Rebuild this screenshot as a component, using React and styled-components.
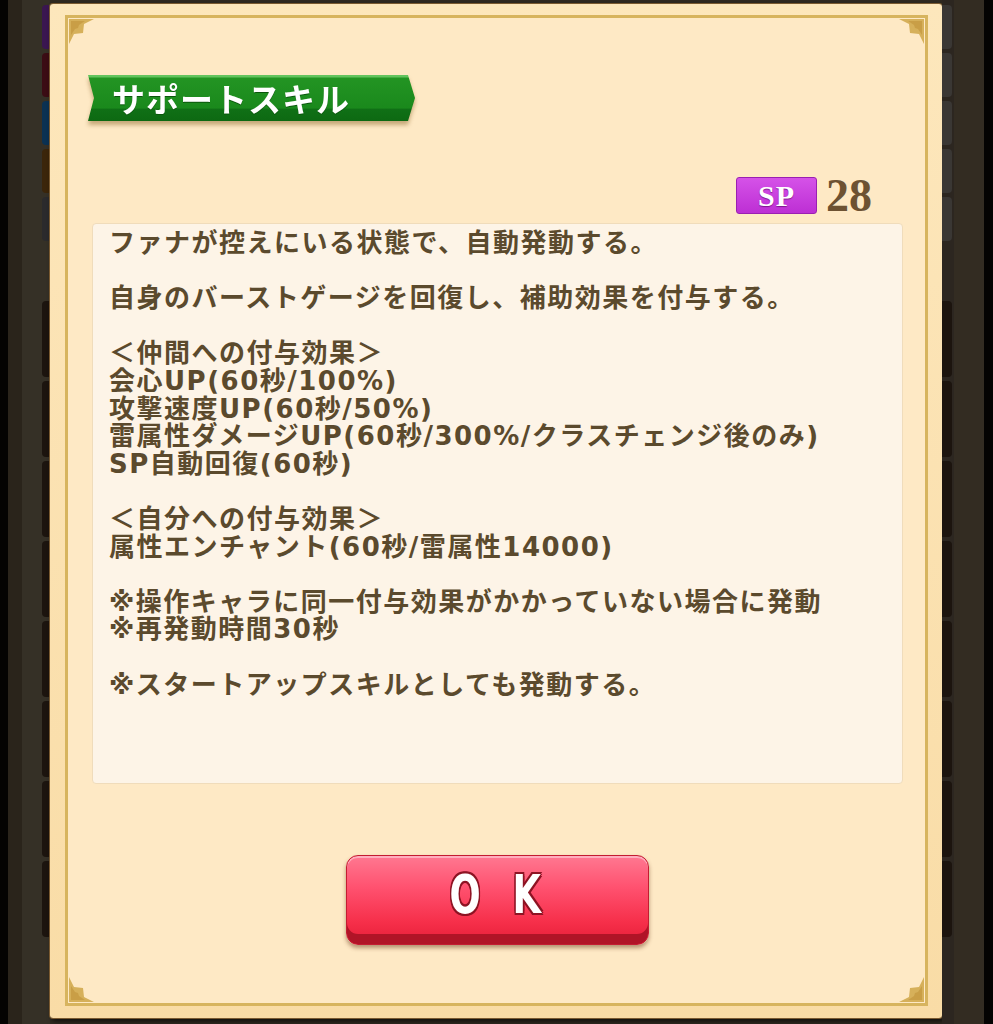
import React from "react";
import styled, { createGlobalStyle } from "styled-components";

const GlobalStyle = createGlobalStyle`
  html, body {
    margin: 0;
    padding: 0;
    background: #000;
    overflow: hidden;
  }
  body {
    font-family: "Noto Sans CJK JP", "Noto Sans", sans-serif;
  }
`;

const skillText = `ファナが控えにいる状態で、自動発動する。

自身のバーストゲージを回復し、補助効果を付与する。

＜仲間への付与効果＞
会心UP(60秒/100%)
攻撃速度UP(60秒/50%)
雷属性ダメージUP(60秒/300%/クラスチェンジ後のみ)
SP自動回復(60秒)

＜自分への付与効果＞
属性エンチャント(60秒/雷属性14000)

※操作キャラに同一付与効果がかかっていない場合に発動
※再発動時間30秒

※スタートアップスキルとしても発動する。`;

const leftTabs = ["#3a1650", "#3b0c14", "#0b3152", "#3b250a", "#2b2a2c"];

function Corner({ flip }) {
  return (
    <CornerMark $flip={flip} width="28" height="28" viewBox="0 0 28 28">
      <path d="M0 0 H25 L15 5 L14 14 L5 15 L0 25 Z" fill="#d6b05a" />
      <path d="M2 2 H16 L10 6 L9 9 L6 10 L2 16 Z" fill="#c99e46" />
    </CornerMark>
  );
}

export default function App() {
  return (
    <>
      <GlobalStyle />
      <Screen>
        <LeftRail>
          <TabColumn $side="left">
            {leftTabs.map((c) => (
              <Tab key={c} $color={c} $side="left" />
            ))}
            <TabGap />
            {[0, 1, 2, 3, 4, 5, 6, 7].map((i) => (
              <Tab key={i} $color="#1c140e" $side="left" $tall />
            ))}
          </TabColumn>
        </LeftRail>

        <Panel>
          <Inner>
            <Corner flip="tl" />
            <Corner flip="tr" />
            <Corner flip="bl" />
            <Corner flip="br" />

            <RibbonShadow>
              <Ribbon>サポートスキル</Ribbon>
            </RibbonShadow>

            <SpRow>
              <SpBadge>SP</SpBadge>
              <SpValue>28</SpValue>
            </SpRow>

            <TextBox>{skillText}</TextBox>

            <ButtonRow>
              <OkButton>
                <OkLabel>O K</OkLabel>
              </OkButton>
            </ButtonRow>
          </Inner>
        </Panel>

        <RightRail>
          <TabColumn $side="right">
            {[0, 1, 2, 3, 4].map((i) => (
              <Tab key={i} $color="#3a3734" $side="right" />
            ))}
            <TabGap />
            {[0, 1, 2, 3, 4, 5, 6, 7].map((i) => (
              <Tab key={i} $color="#1c140e" $side="right" $tall />
            ))}
          </TabColumn>
        </RightRail>
      </Screen>
    </>
  );
}

const Screen = styled.div`
  display: flex;
  width: 993px;
  height: 1024px;
  background: #2f2920;
`;

const LeftRail = styled.div`
  flex: none;
  width: 50px;
  height: 100%;
  display: flex;
  justify-content: flex-end;
  background: linear-gradient(
    to right,
    #040302 0 8px,
    #2a241b 8px 22px,
    #353026 22px 42px
  );
`;

const RightRail = styled.div`
  flex: none;
  width: 51px;
  height: 100%;
  display: flex;
  justify-content: flex-start;
  background: linear-gradient(
    to right,
    #2c2620 0 12px,
    #332c22 12px 42px,
    #040302 42px
  );
`;

const TabColumn = styled.div`
  width: ${(p) => (p.$side === "left" ? "8px" : "10px")};
  display: flex;
  flex-direction: column;
  gap: 4px;
  padding-top: 5px;
`;

const Tab = styled.div`
  flex: none;
  height: ${(p) => (p.$tall ? "76px" : "44px")};
  background: ${(p) => p.$color};
  border-radius: ${(p) => (p.$side === "left" ? "4px 0 0 4px" : "0 4px 4px 0")};
`;

const TabGap = styled.div`
  flex: none;
  height: 52px;
`;

const Panel = styled.div`
  flex: none;
  width: 892px;
  height: 1014px;
  margin-top: 4px;
  box-sizing: border-box;
  padding: 11px 14px 12px 15px;
  background: linear-gradient(to bottom, #fde7bc, #f9dca6);
  border-radius: 3px;
  box-shadow: 0 0 0 1px #7a5a30, 2px 3px 5px rgba(0, 0, 0, 0.7);
`;

const Inner = styled.div`
  position: relative;
  height: 100%;
  box-sizing: border-box;
  border: 3px solid #d7b45e;
  background: #fee9c5;
  display: flex;
  flex-direction: column;
  padding: 0 22px 0 24px;
`;

const CornerMark = styled.svg`
  position: absolute;
  ${(p) => (p.$flip === "tl" || p.$flip === "tr" ? "top: 1px;" : "bottom: 1px;")}
  ${(p) => (p.$flip === "tl" || p.$flip === "bl" ? "left: 1px;" : "right: 1px;")}
  transform: ${(p) =>
    ({ tl: "none", tr: "scaleX(-1)", bl: "scaleY(-1)", br: "scale(-1, -1)" })[
      p.$flip
    ]};
`;

const RibbonShadow = styled.div`
  align-self: flex-start;
  margin: 57px 0 0 -4px;
  filter: drop-shadow(0 4px 2px rgba(130, 90, 30, 0.45));
`;

const Ribbon = styled.div`
  width: 327px;
  height: 46px;
  box-sizing: border-box;
  padding-left: 24px;
  clip-path: polygon(
    0 0,
    calc(100% - 7px) 0,
    100% 50%,
    calc(100% - 7px) 100%,
    0 100%,
    6px 50%
  );
  background: linear-gradient(
    to bottom,
    #63c45e 0,
    #63c45e 2px,
    #239423 3px,
    #1a891c 72%,
    #107016 74%,
    #0d6912 100%
  );
  color: #fff;
  font-family: "Noto Sans CJK JP", sans-serif;
  font-weight: 700;
  font-size: 33px;
  line-height: 46px;
  letter-spacing: 1px;
  text-shadow: 0 1px 0 #0b560d;
`;

const SpRow = styled.div`
  margin-top: 56px;
  height: 37px;
  display: flex;
  justify-content: flex-end;
  align-items: center;
  gap: 9px;
  padding-right: 31px;
`;

const SpBadge = styled.div`
  width: 81px;
  height: 37px;
  box-sizing: border-box;
  display: flex;
  align-items: center;
  justify-content: center;
  background: linear-gradient(to bottom, #d552e8, #bd2fd4);
  border: 1px solid #9a1fb2;
  border-radius: 3px;
  color: #fff;
  font-family: "Liberation Serif", serif;
  font-weight: 700;
  font-size: 30px;
  letter-spacing: 1px;
  text-shadow: 0 1px 1px rgba(80, 0, 90, 0.6);
`;

const SpValue = styled.div`
  font-family: "Liberation Serif", serif;
  font-weight: 700;
  font-size: 46px;
  line-height: 37px;
  color: #6d5232;
`;

const TextBox = styled.div`
  margin-top: 9px;
  height: 561px;
  box-sizing: border-box;
  padding: 6px 16px;
  background: #fdf4e7;
  border: 1px solid #f0dcbb;
  border-radius: 4px;
  white-space: pre-line;
  font-family: "DejaVu Sans", "Noto Sans CJK JP", sans-serif;
  font-weight: 700;
  font-size: 26px;
  line-height: 27.6px;
  letter-spacing: 1.5px;
  color: #5b4a2d;
`;

const ButtonRow = styled.div`
  margin-top: 71px;
  display: flex;
  justify-content: center;
`;

const OkButton = styled.div`
  width: 303px;
  height: 90px;
  box-sizing: border-box;
  display: flex;
  align-items: center;
  justify-content: center;
  padding-bottom: 10px;
  border: 1px solid #c41c32;
  border-radius: 12px;
  background: linear-gradient(
    to bottom,
    #ff7891 0%,
    #ff5270 35%,
    #f62f4a 75%,
    #e61e38 100%
  );
  box-shadow: inset 0 -10px 0 #b01427, inset 0 2px 0 rgba(255, 210, 220, 0.6),
    0 3px 4px rgba(90, 40, 10, 0.45);
`;

const OkLabel = styled.span`
  display: inline-block;
  padding-left: 8px;
  transform: scaleX(0.68);
  font-family: "DejaVu Sans", sans-serif;
  font-weight: 700;
  font-size: 54px;
  line-height: 1;
  letter-spacing: 14px;
  color: #fff;
  text-shadow: 2px 0 0 #8e1424, -2px 0 0 #8e1424, 0 2px 0 #8e1424,
    0 -2px 0 #8e1424, 2px 2px 0 #8e1424, -2px -2px 0 #8e1424,
    2px -2px 0 #8e1424, -2px 2px 0 #8e1424;
`;
